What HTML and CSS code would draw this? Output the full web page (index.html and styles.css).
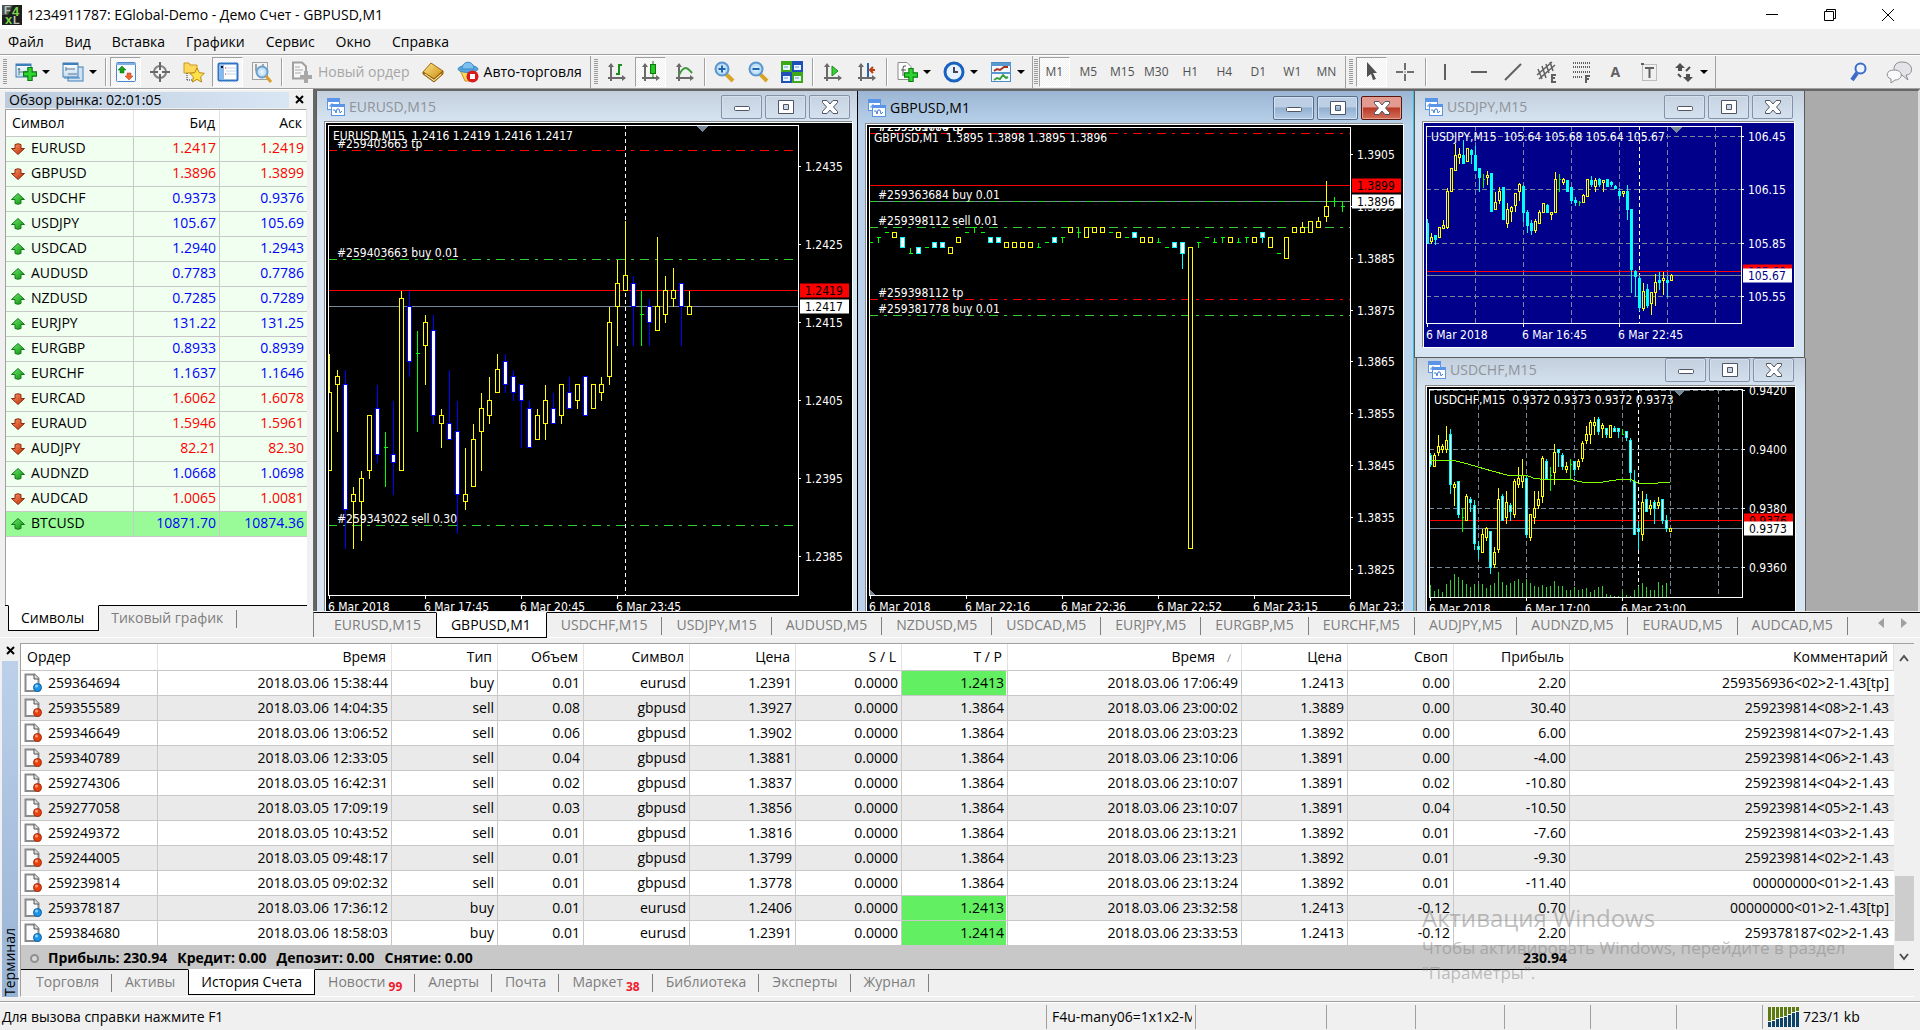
FILE: index.html
```html
<!DOCTYPE html>
<html lang="ru">
<head>
<meta charset="utf-8">
<title>1234911787: EGlobal-Demo - Демо Счет - GBPUSD,M1</title>
<link rel="stylesheet" href="styles.css">
</head>
<body>
<svg class="sprite" aria-hidden="true">
  <defs>
    <linearGradient id="gBlue" x1="0" y1="0" x2="0" y2="1"><stop offset="0" stop-color="#ffffff"/><stop offset="1" stop-color="#c4dcf0"/></linearGradient>
    <linearGradient id="gGold" x1="0" y1="0" x2="1" y2="1"><stop offset="0" stop-color="#ffe88a"/><stop offset="1" stop-color="#c98a12"/></linearGradient>
    <radialGradient id="gLens"><stop offset="0" stop-color="#eef8ff"/><stop offset="1" stop-color="#a9d2f2"/></radialGradient>
    <linearGradient id="gGreen" x1="0" y1="0" x2="1" y2="1"><stop offset="0" stop-color="#6df06d"/><stop offset="1" stop-color="#0a8a0a"/></linearGradient>
    <linearGradient id="gRed" x1="0" y1="0" x2="1" y2="1"><stop offset="0" stop-color="#ff9a6a"/><stop offset="1" stop-color="#b82800"/></linearGradient>
  </defs>
  <symbol id="up" viewBox="0 0 14 12"><path d="M7 .5 13.500 6.500H10V10.500Q7 12 4 10.500V6.500H.5Z" fill="url(#gGreen)" stroke="#16761a"/></symbol>
  <symbol id="down" viewBox="0 0 14 12"><path d="M7 11.500 .5 5.500H4V1.500Q7 0 10 1.500V5.500H13.500Z" fill="url(#gRed)" stroke="#8e2a10"/></symbol>
  <symbol id="plus" viewBox="0 0 13 13"><path d="M4.500 .5h4v4h4v4h-4v4h-4v-4h-4v-4h4Z" fill="#2fd42f" stroke="#0b7a12"/></symbol>
  <symbol id="child" viewBox="0 0 18 18"><rect x=".5" y=".5" width="12" height="11" fill="#fff" stroke="#5b95e8"/><path d="M0 1h13v3H0z" fill="#5b95e8"/><path d="M2 8h2V6h2v2h2V6" fill="none" stroke="#5b95e8"/><rect x="4.500" y="6.500" width="13" height="11" fill="#fff" stroke="#5b95e8"/><path d="M4 6h14v3H4z" fill="#5b95e8"/><path d="M6 12h2l1 3 1-4 2 0 1 4 2-2" fill="none" stroke="#4a7fd6"/></symbol>
  <symbol id="doc-buy" viewBox="0 0 18 20"><path d="M1.500 1.500h9l4 4v12.500h-13z" fill="#fbfbfb" stroke="#8a8a8a" stroke-width="2"/><path d="M10 1v5h5" fill="#ddd" stroke="#555"/><circle cx="13.500" cy="14.500" r="4" fill="#1b93e6" stroke="#0a62a8"/><circle cx="12.500" cy="13" r="1.500" fill="#8fd0ff"/></symbol>
  <symbol id="doc-sell" viewBox="0 0 18 20"><path d="M1.500 1.500h9l4 4v12.500h-13z" fill="#fbfbfb" stroke="#8a8a8a" stroke-width="2"/><path d="M10 1v5h5" fill="#ddd" stroke="#555"/><circle cx="13.500" cy="14.500" r="4" fill="#e8400f" stroke="#a52c08"/><circle cx="12.500" cy="13" r="1.500" fill="#ff9a72"/></symbol>
  <symbol id="new-chart" viewBox="0 0 22 22"><rect x="1" y="3" width="15" height="13" fill="url(#gBlue)" stroke="#3f7fb8"/><path d="M1 3h15v2H1z" fill="#3f7fb8"/><path d="M4 14V8M4 11h8M3 9l1-2 1 2M10 10l2 1-2 1" fill="none" stroke="#5a7690"/><use href="#plus" x="8" y="6" width="14" height="14"/></symbol>
  <symbol id="profiles" viewBox="0 0 22 22"><rect x="6" y="6" width="15" height="14" fill="#cfe3f5" stroke="#3f7fb8"/><rect x="1" y="2" width="15" height="14" fill="url(#gBlue)" stroke="#3f7fb8"/><path d="M1 2h15v2H1z" fill="#3f7fb8"/><path d="M4 6v4M4 8h9M6 13h9" stroke="#5a7690" fill="none"/><path d="M2 17h16" stroke="#3f7fb8"/></symbol>
  <symbol id="market" viewBox="0 0 22 22"><rect x="1.500" y="1.500" width="19" height="19" rx="1" fill="#f7fbff" stroke="#4a88c8"/><path d="M1 2h20v2H1z" fill="#7fb0e0"/><path d="M7 5l4 4H9v3H5V9H3z" fill="#14a014" stroke="#0b6a12" stroke-width=".5"/><path d="M14 19l4-4h-2v-3h-4v3h-2z" fill="#f0642c" stroke="#a83818" stroke-width=".5"/></symbol>
  <symbol id="target" viewBox="0 0 22 22"><circle cx="11" cy="11" r="6" fill="none" stroke="#808080" stroke-width="2"/><path d="M11 1v8M11 13v8M1 11h8M13 11h8" stroke="#686868" stroke-width="2"/></symbol>
  <symbol id="navigator" viewBox="0 0 22 22"><path d="M1 2h5l1 2h7v8H1z" fill="#ffd75a" stroke="#c99a20"/><path d="M4 12v8M4 19h5" stroke="#333" stroke-dasharray="1 1"/><path d="M14 7l2.300 4.700 5 .6-3.700 3.500 1 5.200-4.600-2.600-4.600 2.600 1-5.200L6.700 12.300l5-.6z" fill="#ffe14a" stroke="#b88a12"/></symbol>
  <symbol id="terminal" viewBox="0 0 22 22"><rect x="1.500" y="2.500" width="19" height="17" rx="1" fill="#fff" stroke="#2f76c4" stroke-width="2"/><path d="M3 4h4v15H3z" fill="#8bb8ea"/><path d="M4 6h2" stroke="#111" stroke-width="2"/><path d="M9 7h10M9 10h10M9 13h10" stroke="#c4d4e4"/><path d="M8 7h1M8 13h1" stroke="#e02020"/></symbol>
  <symbol id="tester" viewBox="0 0 22 22"><rect x="1.500" y="1.500" width="15" height="17" fill="#f4f4f4" stroke="#a0a0a0"/><path d="M5 3v7M12 3v6" stroke="#555"/><circle cx="11" cy="11" r="5.500" fill="url(#gLens)" stroke="#6ea0cc" stroke-width="2"/><path d="M15 15l5 6" stroke="#d9a030" stroke-width="3"/></symbol>
  <symbol id="order" viewBox="0 0 22 22"><path d="M2 1.500h9l4 4v12H2z" fill="#f6f6f6" stroke="#a0a0a0" stroke-width="2"/><path d="M4 6h5M4 9h8M4 12h6" stroke="#a8a8a8"/><path d="M13 10h4v4h4v4h-4v4h-4v-4H9v-4h4z" fill="#a8a8a8"/></symbol>
  <symbol id="book" viewBox="0 0 22 22"><path d="M1 11 9 2l12 8-9 8z" fill="url(#gGold)" stroke="#a06a10"/><path d="M1 11v2l11 8 9-8v-3l-9 8z" fill="#c98a1c" stroke="#8a5a08"/><path d="M3 13l9 6.500 7-6" fill="none" stroke="#fff2c0"/></symbol>
  <symbol id="auto" viewBox="0 0 22 22"><path d="M3 9h15l-3 11H8z" fill="#ffd858" stroke="#c89420"/><ellipse cx="11" cy="8" rx="10" ry="3.500" fill="#5aa6dc" stroke="#3c88c4"/><path d="M5 8c0-9 12-9 12 0z" fill="#7cc0ee" stroke="#3c88c4"/><circle cx="15.500" cy="15.500" r="6" fill="#d81c1c"/><path d="M13 13h5v5h-5z" fill="#fff"/></symbol>
  <symbol id="axis" viewBox="0 0 22 22"><path d="M6 3v17M3 17h17" fill="none" stroke="#6a6a6a" stroke-width="2"/><path d="M3 6l3-4 3 4zM17 14l4 3-4 3z" fill="#6a6a6a"/></symbol>
  <symbol id="bars" viewBox="0 0 22 22"><use href="#axis"/><path d="M14 3v11M11 13h3M14 4h3" stroke="#189018" stroke-width="2" fill="none"/></symbol>
  <symbol id="candles" viewBox="0 0 22 22"><use href="#axis"/><path d="M14 0v17" stroke="#0a7a0a"/><rect x="11.500" y="3.500" width="5" height="9" fill="#26c826" stroke="#0a7a0a"/></symbol>
  <symbol id="line" viewBox="0 0 22 22"><use href="#axis"/><path d="M6 14c5-10 8-8 13-2" fill="none" stroke="#3c9a3c" stroke-width="2"/></symbol>
  <symbol id="zoom-in" viewBox="0 0 22 22"><path d="M13 13l7 7" stroke="#d8a428" stroke-width="4"/><circle cx="9" cy="8" r="6.500" fill="url(#gLens)" stroke="#5a96d0" stroke-width="2"/><path d="M5.500 8h7M9 4.500v7" stroke="#1f66b0" stroke-width="2"/></symbol>
  <symbol id="zoom-out" viewBox="0 0 22 22"><path d="M13 13l7 7" stroke="#d8a428" stroke-width="4"/><circle cx="9" cy="8" r="6.500" fill="url(#gLens)" stroke="#5a96d0" stroke-width="2"/><path d="M5.500 8h7" stroke="#1f66b0" stroke-width="2"/></symbol>
  <symbol id="tile" viewBox="0 0 22 22"><path d="M0 0h11v11H0zM11 11h11v11H11z" fill="#3ca818"/><path d="M11 0h11v11H11zM0 11h11v11H0z" fill="#1f50b8"/><path d="M2 4h7v5H2zM13 4h7v5h-7zM2 15h7v5H2zM13 15h7v5h-7z" fill="#e8f4ff"/><path d="M3 6h4M14 6h4M3 17h4M14 17h4" stroke="#6a9ad0"/></symbol>
  <symbol id="scroll" viewBox="0 0 22 22"><use href="#axis"/><path d="M11 5l6 5-6 5z" fill="#3ad03a" stroke="#1a8a1a"/></symbol>
  <symbol id="shift" viewBox="0 0 22 22"><use href="#axis"/><path d="M13 2v14" stroke="#2a62a8" stroke-width="2"/><path d="M20 9h-5M18 6l-3 3 3 3" stroke="#c03c10" stroke-width="2" fill="none"/></symbol>
  <symbol id="indicator" viewBox="0 0 22 22"><path d="M2 1.500h9l4 4v13H2z" fill="#fff" stroke="#8a8a8a"/><path d="M10 5q-3-1-3 2v8M5 9h5" fill="none" stroke="#555"/><use href="#plus" x="8" y="7" width="14" height="14"/></symbol>
  <symbol id="clock" viewBox="0 0 22 22"><circle cx="11" cy="11" r="9" fill="#e6f2ff" stroke="#1a62c0" stroke-width="3"/><path d="M11 6v5h4" fill="none" stroke="#445" stroke-width="2"/></symbol>
  <symbol id="template" viewBox="0 0 22 22"><rect x="1.500" y="1.500" width="19" height="19" fill="#f4faff" stroke="#4e8cc4"/><path d="M1 2h20v3H1zM1 11h20v2H1z" fill="#5a98d0"/><path d="M4 10l3-2 3 1 4-3h4" fill="none" stroke="#a83018" stroke-width="2"/><path d="M4 19l3-2 3 1 3-4 3 3 2-1" fill="none" stroke="#40a040" stroke-width="2"/></symbol>
  <symbol id="cursor" viewBox="0 0 22 22"><path d="M7 1v15l4-3 2 6 3-1-3-6h4z" fill="#505050"/></symbol>
  <symbol id="cross" viewBox="0 0 22 22"><path d="M11 2v7M11 13v7M2 11h7M13 11h7" stroke="#707070" stroke-width="2"/><path d="M11 10v2" stroke="#707070"/></symbol>
  <symbol id="vline" viewBox="0 0 22 22"><path d="M11 3v16" stroke="#606060" stroke-width="2"/></symbol>
  <symbol id="hline" viewBox="0 0 22 22"><path d="M3 11h16" stroke="#606060" stroke-width="2"/></symbol>
  <symbol id="trend" viewBox="0 0 22 22"><path d="M3 19 19 3" stroke="#606060" stroke-width="2"/></symbol>
  <symbol id="channel" viewBox="0 0 22 22"><path d="M1 14 16 1M3 18 19 4M2 8l4 10M6 5l4 12M10 3l3 9M14 1l3 9" stroke="#606060" fill="none" stroke-width="1.500"/><path d="M20 14h-4v7h4M16 17h3" stroke="#606060" fill="none" stroke-width="2"/></symbol>
  <symbol id="fibo" viewBox="0 0 22 22"><path d="M3 2h17M3 6h17M3 11h17M3 16h10" stroke="#606060" stroke-width="2" stroke-dasharray="1 1"/><path d="M20 15h-4v7M16 18h3" stroke="#606060" fill="none" stroke-width="2"/></symbol>
  <symbol id="textlabel" viewBox="0 0 22 22"><rect x="4.500" y="3.500" width="14" height="16" fill="none" stroke="#888" stroke-dasharray="1 1"/><path d="M7 7h9M11.500 7v10" stroke="#606060" stroke-width="2"/><path d="M3 3h3" stroke="#606060" stroke-width="2"/></symbol>
  <symbol id="arrows" viewBox="0 0 22 22"><path d="M7 2l5 5H9v3H5V7H2zM15 21l5-5h-3v-3h-4v3h-3z" fill="#505050"/><path d="M5 13l3 3M13 10l4-4" stroke="#505050" stroke-width="2"/></symbol>
  <symbol id="search" viewBox="0 0 22 22"><path d="M9 12l-5 7" stroke="#3a6cc8" stroke-width="4"/><circle cx="12.500" cy="7.500" r="5" fill="#eef4ff" stroke="#3a6cc8" stroke-width="2"/></symbol>
  <symbol id="chat" viewBox="0 0 26 22"><path d="M16 1c12 0 12 13 4 13l2 5-6-5C6 14 5 1 16 1z" fill="#e4e4e8" stroke="#8a8a94"/><path d="M8 9c10 0 9 10 1 10l-4 3v-4C-1 16 0 9 8 9z" fill="#fafafa" stroke="#8a8a94"/></symbol>
  <symbol id="min" viewBox="0 0 18 16"><rect x="1.500" y="7.500" width="15" height="4" rx="1" fill="#fff" stroke="#4f5564"/></symbol>
  <symbol id="max" viewBox="0 0 18 16"><path d="M1.500 1.500h15v13h-15zM6.500 5.500v5h5v-5z" fill="#fff" fill-rule="evenodd" stroke="#4f5564"/></symbol>
  <symbol id="close" viewBox="0 0 18 16"><path d="M1.500 1.500h4.500L9 5l3-3.500h4.500v2L12.500 8l4 4.500v2H12L9 11l-3 3.500H1.500v-2l4-4.500-4-4.500z" fill="#fff" stroke="#4f5564"/></symbol>
</svg>

<header class="titlebar">
  <svg class="logo" viewBox="0 0 20 20" aria-hidden="true"><rect width="20" height="20" fill="#1d1f1e"/><path d="M0 0h11L6 10H0z" fill="#4b5450"/><text x="2" y="9" class="logo-f">F</text><text x="10" y="11" class="logo-4">4</text><text x="3" y="19" class="logo-4">x</text><text x="11" y="19" class="logo-f">L</text></svg>
  <h1>1234911787: EGlobal-Demo - Демо Счет - GBPUSD,M1</h1>
  <div class="sysbuttons">
    <button aria-label="Свернуть"><svg viewBox="0 0 14 14"><path d="M1 6.500h12" stroke="#000"/></svg></button>
    <button aria-label="Восстановить"><svg viewBox="0 0 14 14"><path d="M1.500 3.500h9v9h-9zM3.500 3.500v-2h9v9h-2" fill="none" stroke="#000"/></svg></button>
    <button aria-label="Закрыть"><svg viewBox="0 0 14 14"><path d="M1 1l12 12M13 1 1 13" stroke="#000"/></svg></button>
  </div>
</header>

<nav class="menubar"><a href="#">Файл</a><a href="#">Вид</a><a href="#">Вставка</a><a href="#">Графики</a><a href="#">Сервис</a><a href="#">Окно</a><a href="#">Справка</a></nav>

<div class="toolbar">
  <div class="group">
    <button class="tb drop" aria-label="Новый график"><svg><use href="#new-chart"/></svg></button>
    <button class="tb drop" aria-label="Профили"><svg><use href="#profiles"/></svg></button>
    <i class="sep"></i>
    <button class="tb on" aria-label="Обзор рынка"><svg><use href="#market"/></svg></button>
    <button class="tb" aria-label="Окно данных"><svg><use href="#target"/></svg></button>
    <button class="tb" aria-label="Навигатор"><svg><use href="#navigator"/></svg></button>
    <button class="tb on" aria-label="Терминал"><svg><use href="#terminal"/></svg></button>
    <button class="tb" aria-label="Тестер"><svg><use href="#tester"/></svg></button>
    <i class="sep"></i>
    <button class="tb wide" disabled><svg><use href="#order"/></svg>Новый ордер</button>
    <button class="tb" aria-label="MetaEditor"><svg><use href="#book"/></svg></button>
    <button class="tb wide"><svg><use href="#auto"/></svg>Авто-торговля</button>
  </div>
  <div class="group">
    <button class="tb" aria-label="Бары"><svg><use href="#bars"/></svg></button>
    <button class="tb on" aria-label="Свечи"><svg><use href="#candles"/></svg></button>
    <button class="tb" aria-label="Линия"><svg><use href="#line"/></svg></button>
    <i class="sep"></i>
    <button class="tb" aria-label="Увеличить"><svg><use href="#zoom-in"/></svg></button>
    <button class="tb" aria-label="Уменьшить"><svg><use href="#zoom-out"/></svg></button>
    <button class="tb" aria-label="Расположить окна"><svg><use href="#tile"/></svg></button>
    <i class="sep"></i>
    <button class="tb" aria-label="Автопрокрутка"><svg><use href="#scroll"/></svg></button>
    <button class="tb" aria-label="Сдвиг графика"><svg><use href="#shift"/></svg></button>
    <i class="sep"></i>
    <button class="tb drop" aria-label="Индикаторы"><svg><use href="#indicator"/></svg></button>
    <button class="tb drop" aria-label="Периоды"><svg><use href="#clock"/></svg></button>
    <button class="tb drop" aria-label="Шаблоны"><svg><use href="#template"/></svg></button>
  </div>
  <div class="group frames">
    <button class="tb on">M1</button><button class="tb">M5</button><button class="tb">M15</button><button class="tb">M30</button><button class="tb">H1</button><button class="tb">H4</button><button class="tb">D1</button><button class="tb">W1</button><button class="tb">MN</button>
  </div>
  <div class="group">
    <button class="tb on" aria-label="Курсор"><svg><use href="#cursor"/></svg></button>
    <button class="tb" aria-label="Перекрестие"><svg><use href="#cross"/></svg></button>
    <i class="sep"></i>
    <button class="tb" aria-label="Вертикальная линия"><svg><use href="#vline"/></svg></button>
    <button class="tb" aria-label="Горизонтальная линия"><svg><use href="#hline"/></svg></button>
    <button class="tb" aria-label="Трендовая линия"><svg><use href="#trend"/></svg></button>
    <button class="tb" aria-label="Канал"><svg><use href="#channel"/></svg></button>
    <button class="tb" aria-label="Фибоначчи"><svg><use href="#fibo"/></svg></button>
    <button class="tb letter">A</button>
    <button class="tb" aria-label="Метка"><svg><use href="#textlabel"/></svg></button>
    <button class="tb drop" aria-label="Стрелки"><svg><use href="#arrows"/></svg></button>
  </div>
  <div class="tools-right">
    <button class="tb" aria-label="Поиск"><svg><use href="#search"/></svg></button>
    <button class="tb" aria-label="Чат"><svg class="chat"><use href="#chat"/></svg></button>
  </div>
</div>

<main class="workspace">
  <aside class="market">
    <div class="panel-head"><h2>Обзор рынка: 02:01:05</h2><button class="x" aria-label="Закрыть"><svg viewBox="0 0 9 9"><path d="M1 1l7 7M8 1 1 8" stroke="#000" stroke-width="2"/></svg></button></div>
    <div class="market-box">
      <table class="quotes">
        <colgroup><col class="q-name"><col class="q-bid"><col></colgroup>
        <thead><tr><th>Символ</th><th>Бид</th><th>Аск</th></tr></thead>
        <tbody>
          <tr class="dn"><td><svg><use href="#down"/></svg>EURUSD</td><td>1.2417</td><td>1.2419</td></tr>
          <tr class="dn"><td><svg><use href="#down"/></svg>GBPUSD</td><td>1.3896</td><td>1.3899</td></tr>
          <tr><td><svg><use href="#up"/></svg>USDCHF</td><td>0.9373</td><td>0.9376</td></tr>
          <tr><td><svg><use href="#up"/></svg>USDJPY</td><td>105.67</td><td>105.69</td></tr>
          <tr><td><svg><use href="#up"/></svg>USDCAD</td><td>1.2940</td><td>1.2943</td></tr>
          <tr><td><svg><use href="#up"/></svg>AUDUSD</td><td>0.7783</td><td>0.7786</td></tr>
          <tr><td><svg><use href="#up"/></svg>NZDUSD</td><td>0.7285</td><td>0.7289</td></tr>
          <tr><td><svg><use href="#up"/></svg>EURJPY</td><td>131.22</td><td>131.25</td></tr>
          <tr><td><svg><use href="#up"/></svg>EURGBP</td><td>0.8933</td><td>0.8939</td></tr>
          <tr><td><svg><use href="#up"/></svg>EURCHF</td><td>1.1637</td><td>1.1646</td></tr>
          <tr class="dn"><td><svg><use href="#down"/></svg>EURCAD</td><td>1.6062</td><td>1.6078</td></tr>
          <tr class="dn"><td><svg><use href="#down"/></svg>EURAUD</td><td>1.5946</td><td>1.5961</td></tr>
          <tr class="dn"><td><svg><use href="#down"/></svg>AUDJPY</td><td>82.21</td><td>82.30</td></tr>
          <tr><td><svg><use href="#up"/></svg>AUDNZD</td><td>1.0668</td><td>1.0698</td></tr>
          <tr class="dn"><td><svg><use href="#down"/></svg>AUDCAD</td><td>1.0065</td><td>1.0081</td></tr>
          <tr class="hot"><td><svg><use href="#up"/></svg>BTCUSD</td><td>10871.70</td><td>10874.36</td></tr>
        </tbody>
      </table>
    </div>
    <div class="tabs market-tabs"><button class="tab active">Символы</button><button class="tab">Тиковый график</button></div>
  </aside>

  <section class="charts">
    <div class="mdi">
      <article class="win w-eur"><header><svg class="ico"><use href="#child"/></svg><h3>EURUSD,M15</h3><button aria-label="Свернуть"><svg><use href="#min"/></svg></button><button aria-label="Развернуть"><svg><use href="#max"/></svg></button><button aria-label="Закрыть"><svg><use href="#close"/></svg></button></header><svg class="plot" id="plot-eur" width="526" height="500" viewBox="326 123 526 500"></svg></article>
      <article class="win w-chf"><header><svg class="ico"><use href="#child"/></svg><h3>USDCHF,M15</h3><button aria-label="Свернуть"><svg><use href="#min"/></svg></button><button aria-label="Развернуть"><svg><use href="#max"/></svg></button><button aria-label="Закрыть"><svg><use href="#close"/></svg></button></header><svg class="plot" id="plot-chf" width="368" height="240" viewBox="1427 387 368 240"></svg></article>
      <article class="win w-jpy"><header><svg class="ico"><use href="#child"/></svg><h3>USDJPY,M15</h3><button aria-label="Свернуть"><svg><use href="#min"/></svg></button><button aria-label="Развернуть"><svg><use href="#max"/></svg></button><button aria-label="Закрыть"><svg><use href="#close"/></svg></button></header><svg class="plot" id="plot-jpy" width="370" height="224" viewBox="1424 123 370 224"></svg></article>
      <article class="win w-gbp current"><header><svg class="ico"><use href="#child"/></svg><h3>GBPUSD,M1</h3><button aria-label="Свернуть"><svg><use href="#min"/></svg></button><button aria-label="Развернуть"><svg><use href="#max"/></svg></button><button class="danger" aria-label="Закрыть"><svg><use href="#close"/></svg></button></header><svg class="plot" id="plot-gbp" width="536" height="500" viewBox="867 125 536 500"></svg></article>
    </div>
    <div class="tabs chart-tabs"><button class="tab">EURUSD,M15</button><button class="tab active">GBPUSD,M1</button><button class="tab">USDCHF,M15</button><button class="tab">USDJPY,M15</button><button class="tab">AUDUSD,M5</button><button class="tab">NZDUSD,M5</button><button class="tab">USDCAD,M5</button><button class="tab">EURJPY,M5</button><button class="tab">EURGBP,M5</button><button class="tab">EURCHF,M5</button><button class="tab">AUDJPY,M5</button><button class="tab">AUDNZD,M5</button><button class="tab">EURAUD,M5</button><button class="tab">AUDCAD,M5</button>
      <span class="pager"><button aria-label="Назад"><svg viewBox="0 0 6 10"><path d="M6 0v10L0 5z" fill="#a0a0a0"/></svg></button><button aria-label="Вперёд"><svg viewBox="0 0 6 10"><path d="M0 0v10l6-5z" fill="#a0a0a0"/></svg></button></span></div>
  </section>
</main>

<section class="terminal">
  <div class="rail"><button class="x" aria-label="Закрыть"><svg viewBox="0 0 9 9"><path d="M1 1l7 7M8 1 1 8" stroke="#000" stroke-width="2"/></svg></button><h2>Терминал</h2></div>
  <div class="terminal-body">
    <div class="history-box">
      <table class="history">
        <colgroup><col class="c-id"><col class="c-time"><col class="c-num"><col class="c-vol"><col class="c-num"><col class="c-num"><col class="c-num"><col class="c-num"><col class="c-time"><col class="c-num"><col class="c-num"><col class="c-profit"><col></colgroup>
        <thead><tr><th>Ордер</th><th>Время</th><th>Тип</th><th>Объем</th><th>Символ</th><th>Цена</th><th>S / L</th><th>T / P</th><th class="sorted">Время</th><th>Цена</th><th>Своп</th><th>Прибыль</th><th>Комментарий</th></tr></thead>
        <tbody>
          <tr><td><svg><use href="#doc-buy"/></svg>259364694</td><td>2018.03.06 15:38:44</td><td>buy</td><td>0.01</td><td>eurusd</td><td>1.2391</td><td>0.0000</td><td class="hit">1.2413</td><td>2018.03.06 17:06:49</td><td>1.2413</td><td>0.00</td><td>2.20</td><td>259356936&lt;02&gt;2-1.43[tp]</td></tr>
          <tr><td><svg><use href="#doc-sell"/></svg>259355589</td><td>2018.03.06 14:04:35</td><td>sell</td><td>0.08</td><td>gbpusd</td><td>1.3927</td><td>0.0000</td><td>1.3864</td><td>2018.03.06 23:00:02</td><td>1.3889</td><td>0.00</td><td>30.40</td><td>259239814&lt;08&gt;2-1.43</td></tr>
          <tr><td><svg><use href="#doc-sell"/></svg>259346649</td><td>2018.03.06 13:06:52</td><td>sell</td><td>0.06</td><td>gbpusd</td><td>1.3902</td><td>0.0000</td><td>1.3864</td><td>2018.03.06 23:03:23</td><td>1.3892</td><td>0.00</td><td>6.00</td><td>259239814&lt;07&gt;2-1.43</td></tr>
          <tr><td><svg><use href="#doc-sell"/></svg>259340789</td><td>2018.03.06 12:33:05</td><td>sell</td><td>0.04</td><td>gbpusd</td><td>1.3881</td><td>0.0000</td><td>1.3864</td><td>2018.03.06 23:10:06</td><td>1.3891</td><td>0.00</td><td>-4.00</td><td>259239814&lt;06&gt;2-1.43</td></tr>
          <tr><td><svg><use href="#doc-sell"/></svg>259274306</td><td>2018.03.05 16:42:31</td><td>sell</td><td>0.02</td><td>gbpusd</td><td>1.3837</td><td>0.0000</td><td>1.3864</td><td>2018.03.06 23:10:07</td><td>1.3891</td><td>0.02</td><td>-10.80</td><td>259239814&lt;04&gt;2-1.43</td></tr>
          <tr><td><svg><use href="#doc-sell"/></svg>259277058</td><td>2018.03.05 17:09:19</td><td>sell</td><td>0.03</td><td>gbpusd</td><td>1.3856</td><td>0.0000</td><td>1.3864</td><td>2018.03.06 23:10:07</td><td>1.3891</td><td>0.04</td><td>-10.50</td><td>259239814&lt;05&gt;2-1.43</td></tr>
          <tr><td><svg><use href="#doc-sell"/></svg>259249372</td><td>2018.03.05 10:43:52</td><td>sell</td><td>0.01</td><td>gbpusd</td><td>1.3816</td><td>0.0000</td><td>1.3864</td><td>2018.03.06 23:13:21</td><td>1.3892</td><td>0.01</td><td>-7.60</td><td>259239814&lt;03&gt;2-1.43</td></tr>
          <tr><td><svg><use href="#doc-sell"/></svg>259244005</td><td>2018.03.05 09:48:17</td><td>sell</td><td>0.01</td><td>gbpusd</td><td>1.3799</td><td>0.0000</td><td>1.3864</td><td>2018.03.06 23:13:23</td><td>1.3892</td><td>0.01</td><td>-9.30</td><td>259239814&lt;02&gt;2-1.43</td></tr>
          <tr><td><svg><use href="#doc-sell"/></svg>259239814</td><td>2018.03.05 09:02:32</td><td>sell</td><td>0.01</td><td>gbpusd</td><td>1.3778</td><td>0.0000</td><td>1.3864</td><td>2018.03.06 23:13:24</td><td>1.3892</td><td>0.01</td><td>-11.40</td><td>00000000&lt;01&gt;2-1.43</td></tr>
          <tr><td><svg><use href="#doc-buy"/></svg>259378187</td><td>2018.03.06 17:36:12</td><td>buy</td><td>0.01</td><td>eurusd</td><td>1.2406</td><td>0.0000</td><td class="hit">1.2413</td><td>2018.03.06 23:32:58</td><td>1.2413</td><td>-0.12</td><td>0.70</td><td>00000000&lt;01&gt;2-1.43[tp]</td></tr>
          <tr><td><svg><use href="#doc-buy"/></svg>259384680</td><td>2018.03.06 18:58:03</td><td>buy</td><td>0.01</td><td>eurusd</td><td>1.2391</td><td>0.0000</td><td class="hit">1.2414</td><td>2018.03.06 23:33:53</td><td>1.2413</td><td>-0.12</td><td>2.20</td><td>259378187&lt;02&gt;2-1.43</td></tr>
        </tbody>
        <tfoot><tr><td colspan="11"><i class="dot"></i><span>Прибыль: 230.94</span><span>Кредит: 0.00</span><span>Депозит: 0.00</span><span>Снятие: 0.00</span></td><td>230.94</td><td></td></tr></tfoot>
      </table>
      <div class="scroll" aria-hidden="true"><svg viewBox="0 0 10 8"><path d="M1 7l4-5 4 5" fill="none" stroke="#505050" stroke-width="2"/></svg><i class="thumb"></i><svg viewBox="0 0 10 8"><path d="M1 1l4 5 4-5" fill="none" stroke="#505050" stroke-width="2"/></svg></div>
    </div>
    <div class="tabs term-tabs"><button class="tab">Торговля</button><button class="tab">Активы</button><button class="tab active">История Счета</button><button class="tab">Новости<sub>99</sub></button><button class="tab">Алерты</button><button class="tab">Почта</button><button class="tab">Маркет<sub>38</sub></button><button class="tab">Библиотека</button><button class="tab">Эксперты</button><button class="tab">Журнал</button></div>
  </div>
  <div class="watermark"><strong>Активация Windows</strong><p>Чтобы активировать Windows, перейдите в раздел "Параметры".</p></div>
</section>

<footer class="status">
  <span class="help">Для вызова справки нажмите F1</span>
  <span class="cell profile">F4u-many06=1x1x2-Many</span>
  <span class="cell s130"></span><span class="cell s89"></span><span class="cell s89"></span><span class="cell s86"></span><span class="cell s86"></span><span class="cell s86"></span>
  <span class="cell net"><svg width="31" height="20" viewBox="0 0 31 20"><path d="M0 0h3v14H0zM4 0h3v13H4zM8 0h3v11H8zM12 0h3v10h-3zM16 0h3v9h-3zM20 0h3v7h-3zM24 0h3v5h-3zM28 0h3v4h-3z" fill="#5d7a12"/><path d="M0 15h3v5H0zM4 14h3v6H4zM8 12h3v8H8zM12 11h3v9h-3zM16 10h3v10h-3zM20 8h3v12h-3zM24 6h3v14h-3zM28 5h3v15h-3z" fill="#0d4468"/></svg>723/1 kb</span>
</footer>
<script src="charts.js"></script>
</body>
</html>
```
FILE: styles.css
```css
* { box-sizing: border-box; }
body {
  margin: 0;
  height: 100vh;
  display: flex;
  flex-direction: column;
  overflow: hidden;
  background: #f0f0f0;
  color: #000;
  font: 14px/20px "Open Sans", "Noto Sans", sans-serif;
}
h1, h2, h3, p { margin: 0; font-size: inherit; font-weight: 400; }
button { border: 0; padding: 0; margin: 0; background: none; font: inherit; color: inherit; }
a { color: inherit; text-decoration: none; }
svg { display: block; }
.sprite { position: absolute; width: 0; height: 0; }

/* title and menu */
.titlebar { flex: none; height: 29px; background: #fff; display: flex; align-items: center; padding-left: 2px; }
.logo { width: 20px; height: 20px; margin-right: 5px; }
.logo-f { font: bold 11px "Liberation Sans", sans-serif; fill: #b9c2bd; }
.logo-4 { font: bold 13px "Liberation Sans", sans-serif; fill: #7ed348; }
.sysbuttons { margin-left: auto; display: flex; padding-right: 3px; }
.sysbuttons button { width: 58px; height: 28px; display: grid; place-items: center; }
.sysbuttons svg { width: 14px; height: 14px; }
.menubar { flex: none; height: 26px; display: flex; align-items: center; gap: 21px; padding-left: 8px; border-bottom: 1px solid #a0a0a0; }

/* toolbar */
.toolbar { flex: none; height: 34px; display: flex; align-items: center; border-top: 1px solid #fff; border-bottom: 1px solid #a0a0a0; }
.group { height: 32px; display: flex; align-items: center; border-right: 1px solid #a0a0a0; padding-left: 2px; }
.group::before { content: ""; width: 4px; height: 26px; margin: 0 3px 0 1px; background: repeating-linear-gradient(#9a9a9a 0 1px, #f0f0f0 1px 2px); }
.tb { flex: none; width: 31px; height: 30px; margin-right: 3px; display: flex; align-items: center; justify-content: center; border: 1px solid transparent; }
.tb svg { width: 22px; height: 22px; flex: none; }
.tb .chat { width: 26px; }
.tb.on { background: repeating-conic-gradient(#fff 0 25%, #f0f0f0 0 50%) 0 0/2px 2px; border-color: #a0a0a0 #fff #fff #a0a0a0; }
.tb.drop { width: 44px; justify-content: flex-start; padding-left: 4px; }
.tb.drop::after { content: ""; margin-left: 5px; border: 4px solid transparent; border-top-color: #000; border-bottom: 0; }
.tb.wide { width: auto; gap: 5px; padding: 0 4px; }
.tb:disabled { color: #a6a6a6; }
.sep { flex: none; width: 2px; height: 28px; margin: 0 3px 0 1px; border-left: 1px solid #a0a0a0; border-right: 1px solid #fff; }
.frames { padding-left: 1px; }
.frames::before { margin: 0 1px 0 0; }
.frames .tb { font: 12px/16px "Open Sans", sans-serif; color: #505050; }
.letter { font: bold 14px/16px "Open Sans", sans-serif; color: #606060; }
.tools-right { margin-left: auto; display: flex; gap: 6px; padding-right: 3px; }

/* workspace */
.workspace { flex: 1; min-height: 0; display: flex; border-bottom: 1px solid #fff; }
.market { width: 313px; flex: none; padding: 2px 6px 5px 5px; display: flex; flex-direction: column; border-top: 1px solid #fff; }
.panel-head { display: flex; justify-content: space-between; height: 17px; }
.panel-head h2 { width: 284px; padding-left: 4px; height: 16px; line-height: 15px; background: linear-gradient(90deg, #bccbdd, #d8e6f4); }
.x { width: 9px; height: 9px; }
.panel-head .x { margin: 3px 3px 0 0; }
.market-box { flex: 1; background: #fff; border: 1px solid #a0a0a0; border-right-color: #fff; border-bottom: 0; }
table { width: 100%; border-collapse: separate; border-spacing: 0; table-layout: fixed; }
th, td { padding: 0; font-weight: 400; text-align: right; white-space: nowrap; overflow: hidden; }
th:first-child, td:first-child { text-align: left; }
.quotes { width: 301px; }
.q-name { width: 128px; }
.q-bid { width: 86px; }
.quotes th { height: 27px; padding-right: 4px; border-right: 1px solid #e2e2e2; border-bottom: 1px solid #c8c8c8; }
.quotes th:first-child { padding-left: 6px; }
.quotes td { height: 25px; padding-right: 3px; line-height: 22px; padding-bottom: 2px; color: #0000ff; background: #f0fff0; border-right: 1px solid #c8c8c8; border-bottom: 1px solid #c8c8c8; }
.quotes td:last-child { border-right: 0; }
.quotes .dn td { color: #ff0000; }
.quotes .hot td { background: #98fb98; }
.quotes td:first-child, .quotes .dn td:first-child { color: #000; padding-left: 5px; }
.quotes td svg { display: inline-block; vertical-align: -2px; width: 14px; height: 12px; margin-right: 6px; }

/* tab strips */
.tabs { flex: none; display: flex; align-items: flex-start; border-top: 1px solid #000; color: #7d7d7d; }
.tab { height: 24px; padding: 0 15px 0 14px; position: relative; line-height: 22px; white-space: nowrap; }
.tab::after { content: ""; position: absolute; right: 0; top: 4px; height: 18px; border-right: 1px solid #808080; }
.tab:has(+ .active)::after, .tab.active::after { display: none; }
.tab.active { margin-top: -1px; height: 26px; background: #fff; color: #000; border: 1px solid #000; border-top-color: #fff; }
.market-tabs { padding-left: 3px; height: 27px; }
.market-tabs .tab { padding: 0 14px 0 12px; }

/* chart desktop */
.charts { flex: 1; min-width: 0; display: flex; flex-direction: column; }
.mdi { flex: 1; min-height: 0; position: relative; overflow: hidden; background: #ababab; border: solid #666; border-width: 2px 2px 0 3px; border-right-color: #dcdcdc; }
.chart-tabs { height: 25px; padding-left: 6px; margin-top: 1px; border-left: 1px solid #808080; }
.pager { margin: 5px 13px 0 auto; display: flex; gap: 17px; }
.pager svg { width: 6px; height: 10px; }
.win { position: absolute; padding: 0 9px 8px; border: 1px solid #5a5a5a; border-top: 0; background: linear-gradient(#c3cfdc, #d7e4f2 32px, #d7e4f2); }
.win.current { background: linear-gradient(#9bb6d4, #b9d1ea 34px, #b9d1ea); border-color: #000 #2fc4dc #000 #000; }
.win header { display: flex; align-items: center; gap: 3px; padding-right: 2px; color: #8e9499; }
.win.current header { color: #000; }
.win .ico { width: 18px; height: 18px; margin: 0 1px 0 1px; }
.win h3 { flex: 1; }
.win header button { width: 41px; height: 24px; display: grid; place-items: center; border: 1px solid #8591a9; border-radius: 2px; box-shadow: inset 0 0 0 1px #d5e0ec; }
.win header button svg { width: 18px; height: 16px; }
.win.current header button { background: linear-gradient(#bccfe4 45%, #93afcf 50%, #b4cde8); border-color: #566d8c; }
.win.current header .danger { background: linear-gradient(#e39a90 45%, #b83a26 50%, #d4705c); border-color: #5c1410; box-shadow: inset 0 0 0 1px #e0a090; }
.plot { outline: 1px solid #fff; box-shadow: -1px -1px 0 1px #8a8a8a; font: 12px "DejaVu Sans Condensed", "DejaVu Sans", sans-serif; }
.w-eur { left: 0; top: 0; width: 546px; height: 600px; }
.w-gbp { left: 541px; top: 0; width: 557px; height: 600px; }
.w-jpy { left: 1098px; top: 0; width: 391px; height: 267px; }
.w-chf { left: 1100px; top: 267px; width: 390px; height: 400px; padding-left: 10px; }
.w-eur header, .w-jpy header { height: 32px; padding-bottom: 1px; }
.w-gbp header { height: 34px; }
.w-chf header { height: 29px; padding-bottom: 5px; }

/* terminal */
.terminal { flex: none; display: flex; margin-top: 5px; position: relative; padding-bottom: 4px; border-bottom: 1px solid #a0a0a0; }
.rail { width: 20px; flex: none; display: flex; flex-direction: column; align-items: center; padding: 2px 2px 0 2px; }
.rail .x { margin: 1px 0 6px; }
.rail h2 { flex: 1; width: 16px; writing-mode: vertical-rl; transform: rotate(180deg); line-height: 16px; padding-top: 1px; background: linear-gradient(#98b4d4, #bcd0ea); }
.terminal-body { flex: 1; min-width: 0; border: 1px solid #a0a0a0; border-right: 0; border-bottom-color: #fff; margin-right: 6px; }
.history-box { display: flex; background: #fff; }
.history { flex: 1; min-width: 0; }
.c-id { width: 137px; } .c-time { width: 234px; } .c-num { width: 106px; } .c-vol { width: 86px; } .c-profit { width: 116px; }
.history th { height: 27px; padding-right: 5px; border-right: 1px solid #e2e2e2; border-bottom: 1px solid #c8c8c8; }
.history th:first-child { padding-left: 6px; }
.history td { height: 25px; line-height: 24px; padding-right: 3px; border-right: 1px solid #c8c8c8; border-bottom: 1px solid #c8c8c8; }
.history td:last-child { border-right: 0; padding-right: 5px; }
.history td:first-child { padding-left: 3px; }
.history tbody tr:nth-child(even) td { background-color: #eaeaea; }
.history tbody .hit, .history tbody tr:nth-child(even) .hit { background: #62f062; box-shadow: inset -1px 0 #fff; }
.history td svg { display: inline-block; vertical-align: -5px; width: 18px; height: 20px; margin-right: 6px; }
.sorted::after { content: "∕"; color: #808080; font-size: 11px; margin: 0 5px 0 12px; }
.history tfoot td { height: 23px; line-height: 22px; background: #c8c8c8; border: 0; font-weight: 700; }
.history tfoot span { margin-right: 10px; }
.dot { display: inline-block; width: 9px; height: 9px; margin: 0 9px 0 6px; border: 2px solid #909090; border-radius: 50%; background: #d8d8d8; }
.scroll { width: 20px; background: #f0f0f0; display: flex; flex-direction: column; align-items: center; padding: 10px 0 8px; }
.scroll svg { width: 10px; height: 8px; }
.thumb { width: 19px; height: 65px; margin: auto 0 12px; background: #cdcdcd; }
.term-tabs { padding-left: 2px; height: 27px; }
.term-tabs .tab { padding: 0 13px; }
.term-tabs .tab.active { padding: 0 12px; }
.term-tabs sub { margin-left: 3px; font: bold 12px/12px "Open Sans", sans-serif; color: #ee1c2e; vertical-align: -4px; }
.watermark { position: absolute; left: 1422px; bottom: 16px; width: 440px; color: rgba(130, 130, 130, .5); pointer-events: none; font-size: 17px; line-height: 25px; }
.watermark strong { font-weight: 400; font-size: 24px; line-height: 34px; }

/* status bar */
.status { flex: none; height: 28px; display: flex; align-items: center; border-top: 1px solid #fff; }
.help { flex: 1; padding-left: 2px; }
.cell { flex: none; height: 24px; line-height: 24px; padding-left: 5px; border-left: 1px solid #a0a0a0; overflow: hidden; white-space: nowrap; }
.profile { width: 149px; border-right: 3px solid #f0f0f0; }
.s130 { width: 131px; } .s89 { width: 89px; } .s86 { width: 86px; }
.net { width: 158px; display: flex; align-items: center; gap: 4px; }

/* chart drawing */
.bg { fill: #000; }
.w-jpy .bg { fill: #00008b; }
.frame { fill: none; stroke: #fff; }
.t { fill: #fff; }
.t.dark { fill: #000; }
.w-jpy .t.dark { fill: #00008b; }
.bull { fill: #000; stroke: #ff0; }
.w-jpy .bull { fill: #00008b; }
.bear { fill: #fff; stroke: #0ff; }
.w-jpy .bear { fill: #0ff; }
.w-eur .bear { stroke: #00f; }
.doji { fill: none; stroke: #0f0; }
.grid { fill: none; stroke: #778899; stroke-dasharray: 5 3; }
.day { stroke: #fff; stroke-dasharray: 4 3; }
.ask { stroke: #f00; }
.bid { stroke: #778899; }
.order { stroke: #32cd32; stroke-dasharray: 9 6 3 6; }
.order.tp { stroke: #f00; }
.vol { stroke: #32cd32; }
.ma { fill: none; stroke: #7fff00; }
```
FILE: charts.js
```js
// Candle strings: type (u up, d down, x doji), high, body top, body bottom, low, in points from the chart's base price.
const charts = [
  {
    id: 'plot-eur', box: [328, 125, 798, 595], x0: 329, step: 8, half: 2, y: p => 166 + (35 - p) * 7.81,
    title: ['EURUSD,M15  1.2416 1.2419 1.2416 1.2417', 333, 140],
    ticks: [[35, '1.2435'], [25, '1.2425'], [15, '1.2415'], [5, '1.2405'], [-5, '1.2395'], [-15, '1.2385']],
    dates: [[329, '6 Mar 2018'], [425, '6 Mar 17:45'], [521, '6 Mar 20:45'], [617, '6 Mar 23:45']], dateY: 611,
    orders: [[37, '#259403663 tp', 1], [23, '#259403663 buy 0.01'], [-11, '#259343022 sell 0.30']],
    ask: [19, '1.2419'], bid: [17, '1.2417'], day: 625, mark: 702,
    data: 'u11 6 -4 -4,u9 8 7 1,d9 7 -9 -14,u-6 -7 -8 -14,u-4 -5 -8 -13,u3 3 -4 -5,d7 4 -2 -3,x1 -1 -1 -6,d5 -2 -3 -7,u19 18 -4 -4,d19 17 10 8,x14 11 11 1,u16 15 12 7,d16 14 3 2,u4 3 2 -1,d9 2 0 0,d5 1 -7 -12,u-1 -7 -8 -9,u2 0 -6 -6,u6 4 1 -4,u8 5 3 2,u11 9 6 6,d11 10 7 6,d9 8 6 5,d7 7 5 -1,d5 4 -1 -1,u4 3 0 0,u7 5 2 0,d6 4 2 2,u7 7 3 2,d8 6 4 4,u7 7 5 4,d8 8 3 3,u7 7 4 4,u8 7 6 5,u17 15 8 7,u23 20 17 12,u28 21 19 19,d21 20 17 12,x19 16 16 12,d18 17 15 12,u26 17 14 14,u21 19 16 15,u22 19 18 17,d20 20 17 12,u19 17 16 16'
  },
  {
    id: 'plot-gbp', box: [869, 127, 1350, 595], x0: 870, step: 8, half: 2, y: p => 154.6 + (105 - p) * 5.183,
    title: ['GBPUSD,M1  1.3895 1.3898 1.3895 1.3896', 874, 142],
    ticks: [[105, '1.3905'], [95, '1.3895'], [85, '1.3885'], [75, '1.3875'], [65, '1.3865'], [55, '1.3855'], [45, '1.3845'], [35, '1.3835'], [25, '1.3825']],
    dates: [[870, '6 Mar 2018'], [966, '6 Mar 22:16'], [1062, '6 Mar 22:36'], [1158, '6 Mar 22:52'], [1254, '6 Mar 23:15'], [1350, '6 Mar 23:31']], dateY: 611,
    orders: [[109, '#259381778 tp', 1], [109, '#259363684 tp', 1], [96, '#259363684 buy 0.01'], [91, '#259398112 sell 0.01'], [77, '#259398112 tp', 1], [74, '#259381778 buy 0.01']],
    ask: [99, '1.3899'], bid: [96, '1.3896'], corner: true,
    data: 'x88 88 88 88,x89 89 89 88,x90 90 90 90,u90 90 89 89,d89 89 87 87,x87 86 86 86,d87 87 86 86,x87 87 87 87,d88 88 87 87,d88 88 87 87,u87 87 86 86,u89 89 88 88,x90 90 90 90,x91 91 91 90,x90 90 90 90,d89 89 88 88,d89 89 88 88,u88 88 87 87,u88 88 87 87,u88 88 87 87,u88 88 87 87,x88 87 87 87,x88 88 88 88,d89 89 88 88,x89 89 89 88,u91 91 90 90,x91 90 90 89,u91 91 89 89,u91 91 90 90,u91 91 90 90,x90 90 90 90,u90 90 89 89,x89 89 89 89,d90 90 89 89,u89 89 88 88,u89 89 88 88,x89 88 88 88,x87 87 87 87,d88 88 87 87,d88 88 86 83,u87 87 29 29,x88 88 88 87,x89 89 89 89,x89 88 88 88,x89 89 89 88,u89 89 88 88,x89 88 88 88,x89 89 89 88,u89 89 88 88,d90 90 89 88,u89 89 87 87,x86 86 86 86,u89 89 85 85,u91 91 90 90,u92 91 90 90,u92 92 90 90,u93 92 91 91,u100 95 93 92,x97 96 96 95,x96 95 95 94'
  },
  {
    id: 'plot-jpy', box: [1426, 126, 1741, 323], x0: 1427, step: 4, half: 1, y: p => 296.4 - p * 1.778,
    title: ['USDJPY,M15  105.64 105.68 105.64 105.67', 1431, 141],
    ticks: [[90, '106.45'], [60, '106.15'], [30, '105.85'], [0, '105.55']],
    dates: [[1427, '6 Mar 2018'], [1523, '6 Mar 16:45'], [1619, '6 Mar 22:45']], dateY: 339,
    grid: [1475, 1523, 1571, 1619, 1667, 1715],
    ask: [14, '105.69'], bid: [12, '105.67'], day: 1639, mark: 1676,
    data: 'd44 41 30 30,u36 33 31 30,d35 34 32 29,u39 39 33 33,u43 40 38 38,u61 59 39 38,u72 72 59 59,u86 79 71 71,u84 80 78 75,d88 79 75 75,u84 83 76 76,d83 82 80 75,d85 79 71 71,d72 72 67 59,x69 66 66 61,u71 68 67 63,d69 69 48 48,u59 53 49 49,u62 59 54 52,d62 61 43 43,u53 49 41 39,u51 50 48 42,u58 58 51 48,u64 63 59 54,d63 62 47 42,d49 47 40 36,d43 41 37 35,u44 42 37 36,u49 47 41 41,u53 52 47 47,d52 51 47 47,u48 47 46 43,u70 66 47 47,x69 66 66 59,u67 66 64 63,d66 65 59 59,d62 61 54 52,d56 54 53 51,x54 53 53 51,u58 57 53 53,u66 66 56 56,d68 65 63 62,u67 65 62 59,d67 66 63 62,u66 65 64 59,d66 66 62 62,d65 64 63 62,d63 62 61 61,d61 59 57 55,u59 59 58 56,d63 59 49 43,d49 49 15 2,d15 14 11 0,d12 10 -6 -8,u8 3 -7 -8,d7 4 -5 -6,u3 2 -4 -10,u13 8 2 -5,d14 9 8 4,u14 10 9 1,d12 9 8 0,u13 12 9 9'
  },
  {
    id: 'plot-chf', box: [1429, 389, 1742, 597], x0: 1430, step: 4, half: 1, y: p => 567.3 - p * 2.95,
    title: ['USDCHF,M15  0.9372 0.9373 0.9372 0.9373', 1434, 404],
    ticks: [[60, '0.9420'], [40, '0.9400'], [20, '0.9380'], [0, '0.9360']],
    dates: [[1430, '6 Mar 2018'], [1526, '6 Mar 17:00'], [1622, '6 Mar 23:00']], dateY: 613,
    grid: [1478, 1526, 1574, 1622, 1670, 1718],
    ask: [16, '0.9376'], bid: [13, '0.9373'], day: 1638, mark: 1679,
    data: 'd39 38 35 34,u39 38 34 34,u45 41 39 38,u42 41 40 39,u48 43 40 39,d47 45 28 25,u29 28 27 21,d29 29 18 17,x20 17 17 12,u25 24 16 16,d24 23 22 19,d23 21 8 6,d9 7 6 3,u13 11 5 5,u14 13 10 9,d12 12 0 -2,u7 5 1 0,u27 23 6 5,d25 24 16 16,u26 22 17 15,d22 21 19 16,u30 29 18 17,u34 30 28 27,u37 31 29 27,d31 30 11 10,u18 18 10 9,u26 20 17 15,u26 23 21 20,u38 37 24 22,d37 36 30 30,x34 31 31 26,u42 39 32 28,d40 40 39 34,d39 38 34 33,u36 34 33 32,x37 35 35 30,d36 36 33 31,u37 36 34 33,u43 42 37 36,u48 45 43 42,u50 49 45 42,u51 49 48 45,d51 50 46 45,u49 48 47 44,d47 47 45 44,u48 48 44 44,d48 47 46 46,d47 47 46 44,x47 45 45 45,d46 46 44 43,d44 43 32 29,d33 29 11 11,d16 13 12 6,u26 22 11 9,d25 23 19 19,u23 21 20 18,d23 22 20 15,u24 22 21 20,d23 23 16 15,d18 16 13 12,u13 13 12 12',
    volumes: [12, 6, 8, 5, 13, 17, 23, 20, 17, 13, 10, 13, 13, 13, 9, 12, 14, 25, 15, 12, 14, 16, 18, 14, 18, 14, 11, 10, 12, 10, 11, 16, 11, 11, 7, 7, 10, 7, 8, 9, 5, 7, 10, 11, 3, 2, 1, 1, 6, 2, 1, 7, 11, 14, 10, 7, 7, 15, 12, 14],
    average: '1430,460 1452,460 1468,464 1478,467 1492,471 1507,475 1526,475 1533,478 1540,479 1568,479 1582,482 1603,482 1622,479 1630,479 1638,483 1658,483 1670,482'
  }
];

for (const c of charts) {
  const [l, t, r, b] = c.box;
  const Y = p => Math.round(c.y(p) - 0.5) + 0.5;
  const line = (cls, x1, y1, x2, y2) => `<path class="${cls}" d="M${x1} ${y1}L${x2} ${y2}"/>`;
  const text = (s, x, y, cls = '') => `<text class="t ${cls}" x="${x}" y="${y}" xml:space="preserve">${s}</text>`;
  let s = `<rect class="bg" x="${l - 4}" y="${t - 4}" width="600" height="600"/><clipPath id="${c.id}-c"><rect x="${l}" y="${t}" width="${r - l}" height="${b - t}"/></clipPath>`;
  s += `<g clip-path="url(#${c.id}-c)" shape-rendering="crispEdges">`;
  if (c.grid) {
    c.grid.forEach(x => { s += line('grid', x + 0.5, t, x + 0.5, b); });
    c.ticks.forEach(([p]) => { s += line('grid', l, Y(p), r, Y(p)); });
  }
  if (c.day) s += line('day', c.day + 0.5, t, c.day + 0.5, b);
  (c.volumes || []).forEach((h, i) => { const x = c.x0 + i * c.step + 0.5; s += line('vol', x, b - h, x, b); });
  s += line('bid', l, Y(c.bid[0]), r, Y(c.bid[0])) + line('ask', l, Y(c.ask[0]), r, Y(c.ask[0]));
  (c.orders || []).forEach(([p, , tp]) => { s += line('order' + (tp ? ' tp' : ''), l, Y(p), r, Y(p)); });
  c.data.split(',').forEach((d, i) => {
    const cls = { u: 'bull', d: 'bear', x: 'doji' }[d[0]];
    const [hi, top, bot, lo] = d.slice(1).split(' ').map(v => Y(+v));
    const x = c.x0 + i * c.step + 0.5;
    s += line(cls, x, hi, x, lo + 0.5);
    s += cls === 'doji' ? line(cls, x - c.half, top, x + c.half + 0.5, top)
      : `<rect class="${cls}" x="${x - c.half}" y="${top}" width="${2 * c.half}" height="${Math.max(2, bot - top)}"/>`;
  });
  if (c.average) s += `<polyline class="ma" points="${c.average}"/>`;
  if (c.mark) s += `<path d="M${c.mark - 6} ${t}h13l-6 7h-1z" fill="#778899"/>`;
  if (c.corner) s += `<path d="M${l} ${b}v-7l6 7z" fill="#778899"/>`;
  (c.orders || []).forEach(([p, label]) => { s += text(label, l + 9, Y(p) - 3); });
  s += '</g>';
  s += `<rect class="frame" x="${l + 0.5}" y="${t + 0.5}" width="${r - l}" height="${b - t}"/>` + text(...c.title);
  c.ticks.forEach(([p, label]) => { s += line('frame', r, Y(p), r + 3, Y(p)) + text(label, r + 7, Y(p) + 4); });
  [[c.ask, '#ff0000'], [c.bid, '#ffffff']].forEach(([[p, label], fill]) => {
    s += `<rect x="${r + 2}" y="${Y(p) - 7}" width="49" height="14" fill="${fill}"/>` + text(label, r + 7, Y(p) + 4, 'dark');
  });
  c.dates.forEach(([x, label]) => { s += line('frame', x + 0.5, b, x + 0.5, b + 4) + text(label, x - 1, c.dateY); });
  document.getElementById(c.id).innerHTML = s;
}
```
